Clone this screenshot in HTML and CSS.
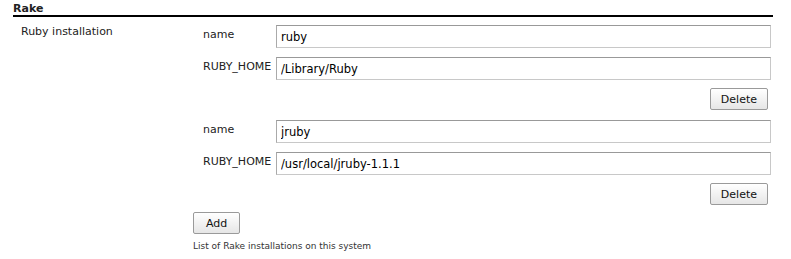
FILE: index.html
```html
<!doctype html>
<html>
<head>
	<meta charset='utf-8' />
	<title>Rake</title>
	<link rel="stylesheet" href="styles.css">
</head>

<body>
	<div class='section'>
		<div class='section-title'>Rake</div>
		<div class='row'>
			<div class='row-label'>Ruby installation</div>
			<div class='row-body'>
				<div class='entry'>
					<div class='field'>
						<label>name</label>
						<input type='text' value='ruby' />
					</div>
					<div class='field'>
						<label>RUBY_HOME</label>
						<input type='text' value='/Library/Ruby' />
					</div>
					<div class='actions'><button class='btn'>Delete</button></div>
				</div>
				<div class='entry'>
					<div class='field'>
						<label>name</label>
						<input type='text' value='jruby' />
					</div>
					<div class='field'>
						<label>RUBY_HOME</label>
						<input type='text' value='/usr/local/jruby-1.1.1' />
					</div>
					<div class='actions'><button class='btn'>Delete</button></div>
				</div>
				<div class='add'><button class='btn btn-add'>Add</button></div>
				<p class='help'>List of Rake installations on this system</p>
			</div>
		</div>
	</div>
</body>
</html>
```

FILE: styles.css
```css
/*reset*/
body,div,p{margin:0;padding:0;}
body{font-family:"DejaVu Sans",Verdana,sans-serif;font-size:11px;color:#222;background:#fff;}

/*section*/
.section{width:760px;margin-left:13px;}
.section-title{font-weight:bold;font-size:11px;line-height:12px;padding-top:3px;border-bottom:2px solid #000;}

.row{display:grid;grid-template-columns:180px 1fr;padding-top:8px;}
.row-label{padding:0 0 0 8px;}
.row-body{display:flex;flex-direction:column;padding-right:2px;}

.entry{display:flex;flex-direction:column;gap:9px;margin-bottom:10px;}
.field{display:grid;grid-template-columns:83px 1fr;align-items:start;}
.field label{padding:3px 0 0 10px;white-space:nowrap;}
.field input{height:23px;box-sizing:border-box;margin:0;border:1px solid #c8c8c8;border-top-color:#999;border-left-color:#aaa;padding:1px 4px 0;font-family:"DejaVu Sans",Verdana,sans-serif;font-size:11.5px;color:#000;}

.actions{display:flex;justify-content:flex-end;padding-right:3px;margin-top:-1px;}

.btn{height:22px;box-sizing:border-box;border:1px solid #9a9a9a;border-radius:2px;background:linear-gradient(#fff,#e6e6e6);font-family:"DejaVu Sans",Verdana,sans-serif;font-size:11px;color:#111;padding:0 10px;cursor:pointer;}
.btn-add{padding:0 12px;}
.add{margin-top:-3px;}

.help{font-size:9px;color:#333;margin-top:7px;}
```
